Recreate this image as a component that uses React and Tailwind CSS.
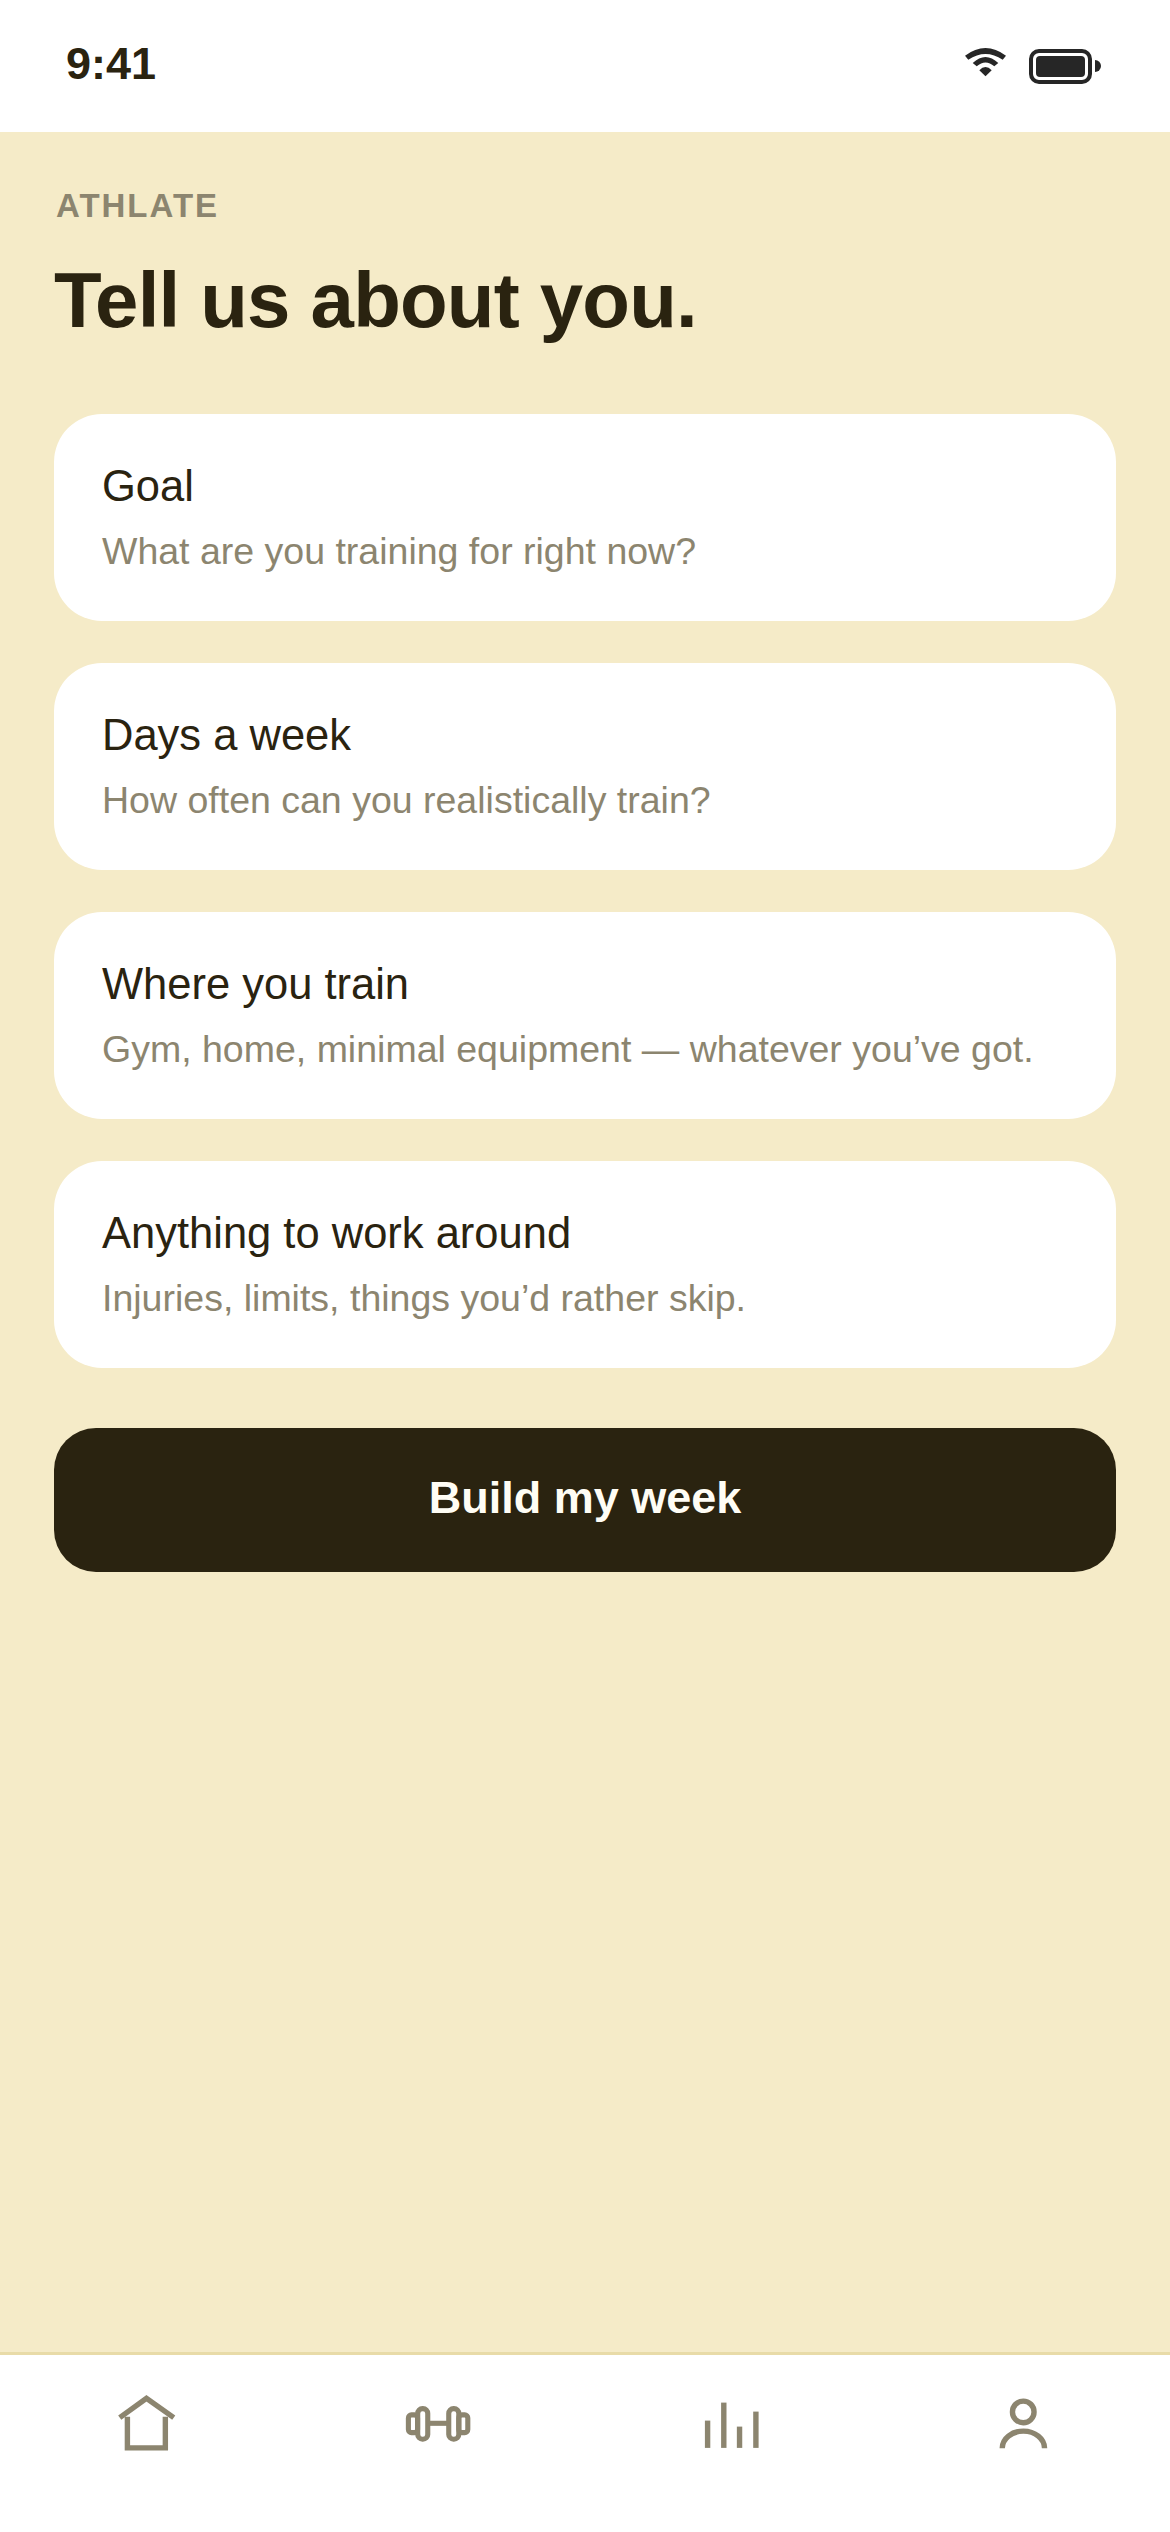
import React from "react";

const cards = [
  { title: "Goal", sub: "What are you training for right now?" },
  { title: "Days a week", sub: "How often can you realistically train?" },
  { title: "Where you train", sub: "Gym, home, minimal equipment — whatever you’ve got." },
  { title: "Anything to work around", sub: "Injuries, limits, things you’d rather skip." },
];

const Wifi = () => (
  <svg width="41" height="30" viewBox="0 0 41 30" fill="#262626" className="mt-[-7px]">
    <path d="M0 7.700Q20.500 -7.700 41 7.700L37.700 11.700Q20.500 0.300 3.300 11.700Z" />
    <path d="M7.700 15Q20.500 3 33.300 15L29.300 18.300Q20.500 10.700 11.700 18.300Z" />
    <path d="M14.300 22.300Q20.500 15.700 26.700 22.300L20.500 28.300Z" />
  </svg>
);

const Battery = () => (
  <div className="flex items-center">
    <div className="w-[63px] h-[35px] rounded-[10px] border-[4px] border-[#262626] p-[3px] bg-white">
      <div className="w-full h-full rounded-[4px] bg-[#262626]" />
    </div>
    <div className="w-[6px] h-[12px] ml-[3px] rounded-r-full bg-[#262626]" />
  </div>
);

const HomeIcon = () => (
  <svg width="72" height="72" viewBox="0 0 24 24" fill="none" stroke="#8c856f" strokeWidth="1.800">
    <path d="M3.250 9.200L12.150 2.800L21.250 9.200" />
    <path d="M5.800 8.900V19.300H18.450V8.900" />
  </svg>
);

const DumbbellIcon = () => (
  <svg width="72" height="72" viewBox="0 0 24 24" fill="none" stroke="#8c856f" strokeWidth="1.700">
    <rect x="1.800" y="8.300" width="3.050" height="5.900" rx="1" />
    <rect x="4.900" y="6.200" width="3.350" height="10.200" rx="1.600" />
    <rect x="15.250" y="6.200" width="3.350" height="10.200" rx="1.600" />
    <rect x="18.600" y="8.300" width="3" height="5.900" rx="1" />
    <path d="M8.250 11.100H15.250" />
  </svg>
);

const BarsIcon = () => (
  <svg width="72" height="72" viewBox="0 0 24 24" fill="none" stroke="#8c856f" strokeWidth="1.800">
    <path d="M4.200 19.300V10.200" />
    <path d="M9.600 19.300V4.200" />
    <path d="M14.850 19.300V12.200" />
    <path d="M20.300 19.300V7.200" />
  </svg>
);

const PersonIcon = () => (
  <svg width="72" height="72" viewBox="0 0 24 24" fill="none" stroke="#8c856f" strokeWidth="1.800">
    <circle cx="11.750" cy="7.300" r="3.600" />
    <path d="M4.750 19.400A7.050 5.700 0 0 1 18.850 19.400" />
  </svg>
);

const App = () => {
  return (
    <div className="min-h-screen flex flex-col bg-[#f5ebc8] font-['Liberation_Sans',Arial,sans-serif] text-[#2a2310]">
      <div className="h-[132px] bg-white flex items-center justify-between pl-[66px] pr-[69px]">
        <span className="text-[45px] font-bold leading-none mt-[-6px]">9:41</span>
        <div className="flex items-center gap-[23px]">
          <Wifi />
          <Battery />
        </div>
      </div>

      <div className="flex-1 px-[54px]">
        <div className="pl-[2px] pt-[54px] text-[33px] leading-[40px] font-bold tracking-[2px] text-[#8c856f]">
          ATHLATE
        </div>
        <h1 className="mt-[30px] text-[78px] leading-[88px] font-bold tracking-[-0.8px]">
          Tell us about you.
        </h1>

        <div className="mt-[70px] flex flex-col gap-[42px]">
          {cards.map((c) => (
            <div key={c.title} className="h-[207px] rounded-[48px] bg-white px-[48px] pt-[46px]">
              <div className="text-[43.5px] leading-[52px]">{c.title}</div>
              <div className="mt-[16px] text-[37.5px] leading-[46px] text-[#8c856f]">{c.sub}</div>
            </div>
          ))}
        </div>

        <button className="mt-[60px] w-full h-[144px] pb-[4px] rounded-[42px] bg-[#2a2310] text-[#fffdf5] text-[45px] font-bold">
          Build my week
        </button>
      </div>

      <div className="h-[180px] bg-white border-t-[3px] border-[#e8dba8] grid grid-cols-4 pt-[35px]">
        <div className="flex justify-center"><HomeIcon /></div>
        <div className="flex justify-center"><DumbbellIcon /></div>
        <div className="flex justify-center"><BarsIcon /></div>
        <div className="flex justify-center"><PersonIcon /></div>
      </div>
    </div>
  );
};

export default App;
